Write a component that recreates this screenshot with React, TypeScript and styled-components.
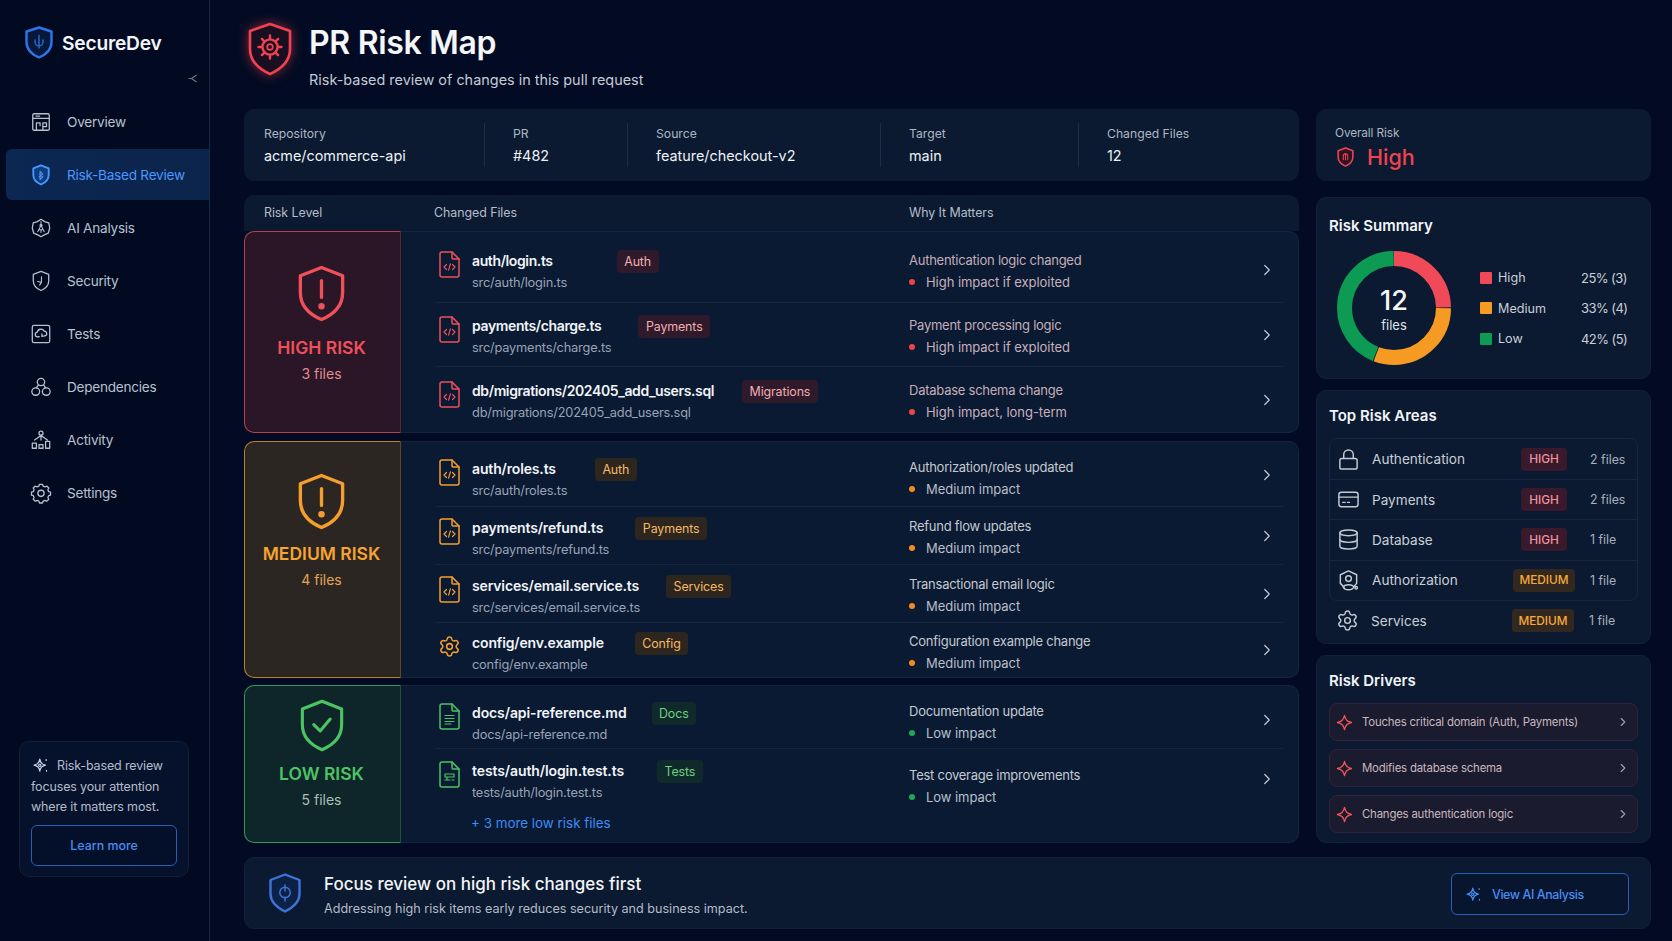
import React from "react";
import styled, { createGlobalStyle } from "styled-components";
import { ChevronRight, Database, Lock, Settings } from "lucide-react";

type Level = "high" | "medium" | "low";

const tone = {
  high: { main: "#f0505a", soft: "#2a1626", edge: "#5c2436", label: "#f0505a", count: "#e08c90", badgeBg: "#2e1a2b", badgeText: "#f3aeb0", first: "#c4aeb6", second: "#c9b1bb", dot: "#f04448", nameSpacing: -0.38 },
  medium: { main: "#f59e2d", soft: "#2c2622", edge: "#5e4526", label: "#f7a431", count: "#e4a455", badgeBg: "#2d261f", badgeText: "#f6b864", first: "#c5c8ce", second: "#b9bec8", dot: "#f28c1c", nameSpacing: -0.15 },
  low: { main: "#4cc464", soft: "#0e2529", edge: "#1d5238", label: "#4cc464", count: "#a9bfb6", badgeBg: "#10292b", badgeText: "#6fd081", first: "#c4cbd2", second: "#b9c0ca", dot: "#1fa85a", nameSpacing: -0.1 },
};

const GlobalStyle = createGlobalStyle`
  html, body {
    margin: 0;
    padding: 0;
    background: #020b22;
  }
  * {
    box-sizing: border-box;
  }
  body {
    font-family: Inter, "Noto Sans", "Liberation Sans", sans-serif;
    color: #e8ecf2;
  }
`;

const Page = styled.div`
  display: flex;
  width: 1672px;
  height: 941px;
  overflow: hidden;
  background: #020b23;
`;

const Sidebar = styled.aside`
  display: flex;
  flex-direction: column;
  flex-shrink: 0;
  width: 210px;
  height: 941px;
  border-right: 1px solid #1a2740;
  background: #010a21;
`;

const LogoRow = styled.div`
  display: flex;
  align-items: center;
  gap: 9px;
  height: 33px;
  margin: 26px 0 0 25px;
`;

const LogoText = styled.span`
  margin-top: 1px;
  font-size: 19.2px;
  font-weight: 600;
  letter-spacing: -0.2px;
  color: #f2f5f9;
`;

const Collapse = styled.svg`
  align-self: flex-end;
  width: 9px;
  height: 9px;
  margin: 15px 12px 0 0;
`;

const Nav = styled.nav`
  display: flex;
  flex-direction: column;
  gap: 2px;
  margin: 13px 0 0 6px;
`;

const NavItem = styled.div<{ $active?: boolean }>`
  display: flex;
  align-items: center;
  gap: 15px;
  height: 51px;
  padding-left: 24px;
  border-radius: 6px 0 0 6px;
  font-size: 13.6px;
  letter-spacing: -0.25px;
  color: ${(p) => (p.$active ? "#4b97ff" : "#b8c1ce")};
  background: ${(p) => (p.$active ? "linear-gradient(90deg, #0b2752, #0b244b)" : "transparent")};
`;

const NavGlyph = styled.svg`
  flex-shrink: 0;
  width: 22px;
  height: 22px;
  fill: none;
  stroke: currentColor;
  stroke-width: 1.4;
  stroke-linecap: round;
  stroke-linejoin: round;
`;

const Tip = styled.div`
  margin: auto 20px 64px 19px;
  padding: 14px 11px 11px 11px;
  height: 136px;
  border: 1px solid #111f38;
  border-radius: 10px;
  background: #06122b;
`;

const TipText = styled.p`
  margin: 0;
  font-size: 12.5px;
  letter-spacing: -0.15px;
  line-height: 20.5px;
  color: #b4bcc9;

  svg {
    width: 17px;
    height: 17px;
    margin: 0 8px -4px 1px;
  }
`;

const LearnMore = styled.div`
  display: flex;
  align-items: center;
  justify-content: center;
  height: 41px;
  margin-top: 7px;
  border: 1px solid #2a5fb8;
  border-radius: 6px;
  background: #04102a;
  font-size: 12.4px;
  font-weight: 500;
  color: #4a8df0;
`;

const Main = styled.main`
  display: flex;
  flex-direction: column;
  flex: 1;
  padding: 0 21px 0 34px;
`;

const Header = styled.header`
  display: flex;
  gap: 17px;
  height: 109px;
  padding: 22px 0 0 4px;
`;

const HeaderMark = styled.svg`
  width: 44px;
  height: 54px;
  filter: drop-shadow(0 0 6px rgba(240, 60, 70, 0.55));
`;

const Title = styled.h1`
  margin: 2px 0 0;
  font-size: 32px;
  line-height: 38px;
  font-weight: 600;
  letter-spacing: -0.3px;
  color: #f4f6fa;
`;

const Subtitle = styled.p`
  margin: 8px 0 0;
  font-size: 14.45px;
  line-height: 20px;
  color: #c3cad5;
`;

const Columns = styled.div`
  display: grid;
  grid-template-columns: 1055px 335px;
  gap: 17px;
`;

const LeftColumn = styled.div`
  display: flex;
  flex-direction: column;
`;

const RightColumn = styled.div`
  display: flex;
  flex-direction: column;
`;

const Panel = styled.section`
  border: 1px solid #122138;
  border-radius: 10px;
  background: #0b1a30;
`;

const InfoBar = styled(Panel)`
  display: grid;
  grid-template-columns: 240px 143px 253px 198px 1fr;
  align-items: center;
  height: 72px;
  border-color: #0b1a30;
`;

const InfoCell = styled.div<{ $pad: number; $last?: boolean }>`
  height: 44px;
  padding-left: ${(p) => p.$pad}px;
  border-right: ${(p) => (p.$last ? "none" : "1px solid #1d2d45")};
`;

const InfoLabel = styled.div`
  padding-top: 1px;
  font-size: 12.2px;
  line-height: 20px;
  color: #aeb6c3;
`;

const InfoValue = styled.div`
  margin-top: 1px;
  font-size: 14.4px;
  line-height: 22px;
  color: #eef1f5;
`;

const TableHead = styled(Panel)`
  display: grid;
  grid-template-columns: 170px 475px 1fr;
  align-items: center;
  height: 36px;
  margin-top: 14px;
  padding: 0 0 2px 19px;
  border-radius: 10px 10px 0 0;
  border-color: #0b1a30;
  font-size: 12.4px;
  letter-spacing: -0.05px;
  color: #b6bdc9;
`;

const Group = styled.div<{ $gap: number }>`
  display: grid;
  grid-template-columns: 157px 1fr;
  margin-top: ${(p) => p.$gap}px;
`;

const LevelCard = styled.div<{ $level: Level; $pad: number }>`
  display: flex;
  flex-direction: column;
  align-items: center;
  padding: ${(p) => p.$pad}px 2px 0 0;
  border: 1px solid ${(p) => tone[p.$level].edge};
  border-left-color: ${(p) => tone[p.$level].main}bb;
  border-top-color: ${(p) => tone[p.$level].main}bb;
  border-bottom-color: ${(p) => tone[p.$level].main}bb;
  border-radius: 10px 0 0 10px;
  background: ${(p) => tone[p.$level].soft};
`;

const LevelName = styled.div<{ $level: Level; $gap: number }>`
  margin-top: ${(p) => p.$gap}px;
  font-size: 17.5px;
  line-height: 24px;
  font-weight: 600;
  color: ${(p) => tone[p.$level].label};
`;

const LevelCount = styled.div<{ $level: Level }>`
  margin-top: 4px;
  font-size: 14px;
  line-height: 20px;
  color: ${(p) => tone[p.$level].count};
`;

const Rows = styled.div`
  padding: 0 15px 0 34px;
  border: 1px solid #14253e;
  border-left: none;
  border-radius: 0 10px 10px 0;
  background: #0a1a33;
`;

const Row = styled.div<{ $h: number; $pad?: number; $plain?: boolean }>`
  display: grid;
  grid-template-columns: 470px 1fr 16px;
  align-items: center;
  height: ${(p) => p.$h}px;
  padding: ${(p) => p.$pad ?? 0}px 8px 0 4px;
  border-bottom: ${(p) => (p.$plain ? "none" : "1px solid #15253d")};
`;

const FileCell = styled.div<{ $shift: number }>`
  display: flex;
  align-items: flex-start;
  gap: 12px;
  margin-top: ${(p) => p.$shift * 2}px;
`;

const FileGlyph = styled.svg<{ $level: Level }>`
  flex-shrink: 0;
  width: 21px;
  height: 27px;
  margin-top: 1px;
  fill: none;
  stroke: ${(p) => tone[p.$level].main};
  stroke-width: 1.5;
  stroke-linecap: round;
  stroke-linejoin: round;
`;

const NameLine = styled.div<{ $gap: number }>`
  display: flex;
  align-items: center;
  gap: ${(p) => p.$gap}px;
  height: 23px;
`;

const FileName = styled.span<{ $level: Level }>`
  padding-bottom: 2px;
  font-size: 14px;
  font-weight: 600;
  letter-spacing: ${(p) => tone[p.$level].nameSpacing}px;
  color: #f1f4f8;
`;

const Badge = styled.span<{ $level: Level }>`
  display: inline-flex;
  align-items: center;
  height: 23px;
  padding: 0 7.5px;
  border-radius: 4px;
  font-size: 12.4px;
  letter-spacing: -0.1px;
  color: ${(p) => tone[p.$level].badgeText};
  background: ${(p) => tone[p.$level].badgeBg};
`;

const FilePath = styled.div`
  font-size: 12.8px;
  letter-spacing: -0.19px;
  line-height: 20px;
  color: #99a3b3;
`;

const WhyCell = styled.div<{ $shift: number }>`
  margin-top: ${(p) => p.$shift * 2}px;
`;

const WhyTitle = styled.div<{ $level: Level }>`
  font-size: 13px;
  letter-spacing: -0.25px;
  line-height: 22px;
  color: ${(p) => tone[p.$level].first};
`;

const WhyImpact = styled.div<{ $level: Level }>`
  display: flex;
  align-items: center;
  gap: 11px;
  font-size: 13px;
  letter-spacing: -0.05px;
  line-height: 22px;
  color: ${(p) => tone[p.$level].second};

  &::before {
    content: "";
    width: 6px;
    height: 6px;
    border-radius: 50%;
    background: ${(p) => tone[p.$level].dot};
  }
`;

const Chevron = styled(ChevronRight)`
  width: 18px;
  height: 18px;
  margin: 0 -1px;
  stroke-width: 1.6;
  color: #c2c9d4;
`;

const MoreLink = styled.div`
  padding: 4px 0 0 36px;
  height: 33px;
  font-size: 13.4px;
  line-height: 20px;
  color: #3f8cf5;
`;

const OverallCard = styled(Panel)`
  height: 72px;
  padding: 12px 0 0 18px;
  border-color: #0b1a30;
`;

const OverallLabel = styled(InfoLabel)`
  font-size: 11.8px;
  letter-spacing: -0.1px;
`;

const OverallValue = styled.div`
  display: flex;
  align-items: center;
  gap: 11px;
  height: 28px;
  font-size: 21.5px;
  font-weight: 500;
  color: #f0434f;
`;

const SideCard = styled(Panel)<{ $h: number; $gap: number; $pad: number }>`
  height: ${(p) => p.$h}px;
  margin-top: ${(p) => p.$gap}px;
  padding: ${(p) => p.$pad}px 12px 0;
`;

const CardTitle = styled.h2`
  margin: 0;
  font-size: 15px;
  line-height: 22px;
  font-weight: 600;
  color: #f1f4f8;
`;

const SummaryBody = styled.div`
  display: flex;
  align-items: center;
  gap: 28px;
  margin: 13px 0 0 7px;
`;

const Donut = styled.div`
  position: relative;
  width: 116px;
  height: 116px;
`;

const DonutRing = styled.svg`
  display: block;
  width: 116px;
  height: 116px;
  transform: rotate(-90deg);
`;

const DonutLabel = styled.div`
  position: absolute;
  inset: 3px 0 0;
  display: flex;
  flex-direction: column;
  align-items: center;
  justify-content: center;
`;

const DonutCount = styled.div`
  font-size: 27px;
  line-height: 30px;
  font-weight: 500;
  color: #f6f7fa;
`;

const DonutUnit = styled.div`
  font-size: 13px;
  line-height: 18px;
  color: #dfe3e9;
`;

const Legend = styled.div`
  display: flex;
  flex-direction: column;
`;

const LegendRow = styled.div`
  display: grid;
  grid-template-columns: 18px 83px auto;
  align-items: center;
  height: 30.5px;
  font-size: 12.6px;
  color: #c9cfd8;
`;

const Swatch = styled.span<{ $color: string }>`
  width: 12px;
  height: 12px;
  border-radius: 1px;
  background: ${(p) => p.$color};
`;

const LegendValue = styled.span`
  font-size: 13px;
  letter-spacing: -0.55px;
`;

const AreaList = styled.div`
  margin-top: 11px;
  border: 1px solid #15263e;
  border-radius: 8px;
`;

const AreaRow = styled.div<{ $line?: boolean }>`
  display: grid;
  grid-template-columns: 34px 137px 70px auto;
  align-items: center;
  height: 40.2px;
  padding-left: 8px;
  border-top: ${(p) => (p.$line ? "1px solid #15263e" : "none")};
  font-size: 13.6px;
  color: #c9cfd8;
`;

const AreaGlyph = styled.span`
  display: flex;
  margin-left: -1px;
  color: #c4cbd5;

  svg {
    width: 23px;
    height: 23px;
    stroke-width: 1.5;
  }
`;

const AreaBadge = styled.span<{ $level: Level }>`
  justify-self: center;
  display: inline-flex;
  align-items: center;
  height: 23px;
  padding: 0 ${(p) => (p.$level === "high" ? 8 : 6.5)}px;
  border-radius: 4px;
  font-size: 11.8px;
  font-weight: 500;
  color: ${(p) => (p.$level === "high" ? "#f0919c" : "#f6a93c")};
  background: ${(p) => (p.$level === "high" ? "#381a2c" : "#33281f")};
`;

const AreaCount = styled.span`
  margin-left: 11px;
  font-size: 12.4px;
  color: #a7afbc;
`;

const DriverList = styled.div`
  display: flex;
  flex-direction: column;
  gap: 8px;
  margin-top: 11px;
`;

const DriverRow = styled.div`
  display: flex;
  align-items: center;
  gap: 9px;
  height: 38px;
  padding: 0 7px 0 6px;
  border: 1px solid #33233a;
  border-radius: 8px;
  background: #1a1b2e;
  font-size: 11.4px;
  letter-spacing: -0.2px;
  color: #c8b8be;

  span {
    flex: 1;
  }
`;

const DriverGlyph = styled.svg`
  flex-shrink: 0;
  width: 17px;
  height: 17px;
  fill: none;
  stroke: #f0565c;
  stroke-width: 1.8;
  stroke-linejoin: round;
`;

const DriverChevron = styled(ChevronRight)`
  width: 14px;
  height: 14px;
  color: #97a0ae;
`;

const Footer = styled(Panel)`
  display: flex;
  align-items: center;
  height: 72px;
  margin-top: 14px;
  padding: 0 21px 0 24px;
`;

const FooterText = styled.div`
  flex: 1;
  margin: 5px 0 0 23px;
`;

const FooterTitle = styled.div`
  font-size: 17px;
  line-height: 24px;
  font-weight: 500;
  color: #f3f5f9;
`;

const FooterSub = styled.div`
  margin-top: 3px;
  font-size: 12.6px;
  line-height: 20px;
  color: #b4bcc9;
`;

const ViewButton = styled.div`
  display: flex;
  align-items: center;
  gap: 10px;
  width: 178px;
  height: 42px;
  margin-top: 2px;
  padding-left: 13px;
  border: 1px solid #2a5fb8;
  border-radius: 6px;
  background: #07152f;
  font-size: 12.4px;
  letter-spacing: -0.4px;
  font-weight: 500;
  color: #4a8df0;
`;

const SHIELD = "M12 1.6 L20.4 4.8 V12 C20.4 17 16.6 20.4 12 22.4 C7.4 20.4 3.6 17 3.6 12 V4.8 Z";

const Sparkle = ({ color, size = 17 }: { color: string; size?: number }) => (
  <svg viewBox="0 0 24 24" width={size} height={size} fill="none" stroke={color} strokeWidth="1.7" strokeLinejoin="round" strokeLinecap="round">
    <path d="M11 3 C11.6 8 14 10.6 19 11.5 C14 12.4 11.6 15 11 20 C10.4 15 8 12.4 3 11.5 C8 10.6 10.4 8 11 3 Z" />
    <circle cx="11" cy="11.5" r="1.6" />
    <path d="M20 3.5v1.4M20.5 19v1" />
  </svg>
);

const LevelShield = ({ level }: { level: Level }) => (
  <svg
    viewBox="0 0 48 58"
    width={level === "low" ? 46 : 49}
    height={level === "low" ? 53 : 57}
    fill="none"
    stroke={tone[level].main}
    strokeWidth="3.4"
    strokeLinejoin="round"
    strokeLinecap="round"
  >
    <path d="M24 2.5 L45.5 11 V28 C45.5 42 36 50.5 24 55.5 C12 50.5 2.5 42 2.5 28 V11 Z" />
    {level === "low" ? (
      <path d="M15 28 L22 35 L33 22" />
    ) : (
      <>
        <path d="M24 16 V33" />
        <circle cx="24" cy="42" r="1.6" fill={tone[level].main} />
      </>
    )}
  </svg>
);

const FileIcon = ({ level, kind }: { level: Level; kind: string }) => {
  if (kind === "gear") {
    return (
      <Settings size={23} color={tone[level].main} strokeWidth={1.6} style={{ flexShrink: 0, marginLeft: -1, marginRight: -1, marginTop: 3 }} />
    );
  }
  return (
    <FileGlyph $level={level} viewBox="0 0 21 27">
      <path d="M3 1 H13 L20 8 V24 A2 2 0 0 1 18 26 H3 A2 2 0 0 1 1 24 V3 A2 2 0 0 1 3 1 Z" />
      <path d="M13 1 V7 A1 1 0 0 0 14 8 H20" />
      {kind === "code" && <path strokeWidth="1.2" d="M7.5 13.5 L5 16 L7.5 18.5 M13.5 13.5 L16 16 L13.5 18.5 M11.4 12.8 L9.6 19.2" />}
      {kind === "doc" && <path strokeWidth="1.2" d="M6 12.5h9M6 15.5h9M6 18.5h9M6 21h6" />}
      {kind === "test" && <path strokeWidth="1.2" d="M6 13h9v3H6zM6 19h5M13 19h2M8 16v3" />}
    </FileGlyph>
  );
};

const navItems = [
  {
    label: "Overview",
    glyph: (
      <>
        <rect x="3" y="3" width="18" height="18" rx="1.5" />
        <path d="M3 8h18M6.5 5.5h4M7 21v-8h4v3M14 21v-4h4v-4h-4v4" />
      </>
    ),
  },
  {
    label: "Risk-Based Review",
    active: true,
    glyph: (
      <>
        <path d={SHIELD} strokeWidth="2" fill="#0f3d7c" />
        <path d="M11 8 L14 11 L10 14 M11 8 V17 L14 14 L10.5 11" strokeWidth="1.2" />
      </>
    ),
  },
  {
    label: "AI Analysis",
    glyph: (
      <>
        <path d="M12 2.5 L16 5 L20.5 6.5 L21.5 12 L20 17.5 L15.5 19.5 L12 21.5 L8.5 19.5 L4 17.5 L2.5 12 L3.5 6.5 L8 5 Z" />
        <path d="M12 5v4M12 9l-3.5 7M12 9l3.5 7M10 14h4M12 14v3" strokeWidth="1.1" />
        <circle cx="12" cy="9" r="1" />
      </>
    ),
  },
  {
    label: "Security",
    glyph: (
      <>
        <path d={SHIELD} />
        <path d="M12.5 7.5 V13.5 L10.5 16.5 M8.5 12.5 L12.5 13.5" strokeWidth="1.2" />
      </>
    ),
  },
  {
    label: "Tests",
    glyph: (
      <>
        <rect x="2.5" y="2.5" width="19" height="19" rx="2" />
        <path d="M10 15 H8.5 A2.5 2.5 0 0 1 8 10 A4 4 0 0 1 15.5 9 A2.5 2.5 0 0 1 16 14 L13 14.5 L13 12" />
      </>
    ),
  },
  {
    label: "Dependencies",
    glyph: (
      <>
        <circle cx="12" cy="6.5" r="4" />
        <rect x="2" y="13" width="8.5" height="8" rx="4" />
        <rect x="13.5" y="13" width="8.5" height="8" rx="4" />
        <path d="M9 10 L7 13M15 10 L17 13" />
      </>
    ),
  },
  {
    label: "Activity",
    glyph: (
      <>
        <circle cx="12" cy="4.5" r="2.2" />
        <path d="M12 7 L5 12M12 7 L19 12M12 7 V12M2.5 21 V15.5 H7 V21 Z M9.8 21 V17 H14.2 V21 Z M17 21 V13.5 H21.5 V21 Z" />
      </>
    ),
  },
  {
    label: "Settings",
    glyph: (
      <>
        <path d="M10.3 2.5h3.4l.6 2 2 .9 1.9-1 2.3 2.2-1 1.9.9 2 2 .6v3.2l-2 .6-.9 2 1 1.9-2.3 2.2-1.9-1-2 .9-.6 2h-3.4l-.6-2-2-.9-1.9 1-2.3-2.2 1-1.9-.9-2-2-.6v-3.2l2-.6.9-2-1-1.9 2.3-2.2 1.9 1 2-.9z" />
        <circle cx="12" cy="12.4" r="3.4" />
      </>
    ),
  },
];

interface FileRow {
  name: string;
  path: string;
  tag: string;
  gap: number;
  why: string;
  impact: string;
  icon: string;
  h: number;
  pad?: number;
  fileShift: number;
  whyShift: number;
}

const groups: {
  level: Level;
  title: string;
  count: string;
  pad: number;
  gap: number;
  labelGap: number;
  rows: FileRow[];
}[] = [
  {
    level: "high",
    title: "HIGH RISK",
    count: "3 files",
    pad: 33,
    gap: 0,
    labelGap: 14,
    rows: [
      { name: "auth/login.ts", path: "src/auth/login.ts", tag: "Auth", gap: 64, why: "Authentication logic changed", impact: "High impact if exploited", icon: "code", h: 71, pad: 6, fileShift: 1, whyShift: 0.5 },
      { name: "payments/charge.ts", path: "src/payments/charge.ts", tag: "Payments", gap: 37, why: "Payment processing logic", impact: "High impact if exploited", icon: "code", h: 64, fileShift: 1.5, whyShift: 1 },
      { name: "db/migrations/202405_add_users.sql", path: "db/migrations/202405_add_users.sql", tag: "Migrations", gap: 28, why: "Database schema change", impact: "High impact, long-term", icon: "code", h: 65, fileShift: 2, whyShift: 1.5 },
    ],
  },
  {
    level: "medium",
    title: "MEDIUM RISK",
    count: "4 files",
    pad: 31,
    gap: 8,
    labelGap: 12,
    rows: [
      { name: "auth/roles.ts", path: "src/auth/roles.ts", tag: "Auth", gap: 39, why: "Authorization/roles updated", impact: "Medium impact", icon: "code", h: 65, pad: 2, fileShift: 4, whyShift: 2.5 },
      { name: "payments/refund.ts", path: "src/payments/refund.ts", tag: "Payments", gap: 32, why: "Refund flow updates", impact: "Medium impact", icon: "code", h: 58, fileShift: 3, whyShift: 1 },
      { name: "services/email.service.ts", path: "src/services/email.service.ts", tag: "Services", gap: 27, why: "Transactional email logic", impact: "Medium impact", icon: "code", h: 58, fileShift: 3, whyShift: 1 },
      { name: "config/env.example", path: "config/env.example", tag: "Config", gap: 31, why: "Configuration example change", impact: "Medium impact", icon: "gear", h: 54, fileShift: 3, whyShift: 2 },
    ],
  },
  {
    level: "low",
    title: "LOW RISK",
    count: "5 files",
    pad: 13,
    gap: 7,
    labelGap: 10,
    rows: [
      { name: "docs/api-reference.md", path: "docs/api-reference.md", tag: "Docs", gap: 25, why: "Documentation update", impact: "Low impact", icon: "doc", h: 63, pad: 6, fileShift: 3, whyShift: 1.5 },
      { name: "tests/auth/login.test.ts", path: "tests/auth/login.test.ts", tag: "Tests", gap: 33, why: "Test coverage improvements", impact: "Low impact", icon: "test", h: 60, fileShift: 2.5, whyShift: 6.5 },
    ],
  },
];

const donutParts = [
  { color: "#f04a58", from: 0, to: 25 },
  { color: "#f59a22", from: 25, to: 56 },
  { color: "#0d9a52", from: 56, to: 100 },
];

const legend = [
  { name: "High", color: "#f04a58", value: "25% (3)" },
  { name: "Medium", color: "#f59a22", value: "33% (4)" },
  { name: "Low", color: "#0d9a52", value: "42% (5)" },
];

const areas: { name: string; level: Level; count: string; icon: React.ReactNode }[] = [
  { name: "Authentication", level: "high", count: "2 files", icon: <Lock /> },
  {
    name: "Payments",
    level: "high",
    count: "2 files",
    icon: (
      <svg viewBox="0 0 24 24" fill="none" stroke="currentColor" strokeLinecap="round">
        <rect x="2" y="4.5" width="20" height="15" rx="2.5" />
        <path d="M2 9.5h20M6 15h2.5M11 15h2" />
      </svg>
    ),
  },
  { name: "Database", level: "high", count: "1 file", icon: <Database /> },
  {
    name: "Authorization",
    level: "medium",
    count: "1 file",
    icon: (
      <svg viewBox="0 0 24 24" fill="none" stroke="currentColor" strokeLinecap="round" strokeLinejoin="round">
        <path d="M7.5 19 L3.5 15 V6 L12 2 L20.5 6 V15 L18 18" />
        <circle cx="12" cy="10" r="3" />
        <path d="M6.5 19 C7.5 15.5 16.5 15.5 17.5 19 C16 22.5 8 22.5 6.5 19 Z" />
        <circle cx="20" cy="19.5" r="1.3" />
      </svg>
    ),
  },
  { name: "Services", level: "medium", count: "1 file", icon: <Settings /> },
];

const drivers = [
  "Touches critical domain (Auth, Payments)",
  "Modifies database schema",
  "Changes authentication logic",
];

const RING = 2 * Math.PI * 49.5;

const App: React.FC = () => {
  return (
    <Page>
      <GlobalStyle />
      <Sidebar>
        <LogoRow>
          <svg viewBox="0 0 28 33" width="28" height="33" fill="none" stroke="#2f74e8" strokeLinejoin="round" strokeLinecap="round">
            <path d="M14 1.5 L26.5 5.5 V16 C26.5 23.5 21 28.5 14 31.5 C7 28.5 1.5 23.5 1.5 16 V5.5 Z" strokeWidth="2.4" fill="#06193c" />
            <path d="M14 9.5 V22 M10 14 V16 A4 4 0 0 0 18 16 V14" strokeWidth="1.5" stroke="#2a66cc" />
          </svg>
          <LogoText>SecureDev</LogoText>
        </LogoRow>
        <Collapse viewBox="0 0 9 9" fill="none" stroke="#6d7889" strokeWidth="1.1">
          <path d="M8.5 1 L3.5 4.5 L8.5 8 M0.5 4.5 H4" />
        </Collapse>
        <Nav>
          {navItems.map((item) => (
            <NavItem key={item.label} $active={item.active}>
              <NavGlyph viewBox="0 0 24 24">{item.glyph}</NavGlyph>
              {item.label}
            </NavItem>
          ))}
        </Nav>
        <Tip>
          <TipText>
            <Sparkle color="#c9d4e8" />
            Risk-based review focuses your attention where it matters most.
          </TipText>
          <LearnMore>Learn more</LearnMore>
        </Tip>
      </Sidebar>

      <Main>
        <Header>
          <HeaderMark viewBox="0 0 44 54" fill="none" stroke="#f0434f" strokeLinejoin="round" strokeLinecap="round">
            <path d="M22 2 L42 9 V27 C42 39 33 47 22 52 C11 47 2 39 2 27 V9 Z" strokeWidth="2.6" fill="#1a0f22" />
            <circle cx="22" cy="25" r="7.6" strokeWidth="2.4" />
            <circle cx="22" cy="25" r="2.8" strokeWidth="1.8" />
            <path d="M22 13.5 V17M22 33 V36.5M10.5 25 H14M30 25 H33.5M13.9 16.9 L16.4 19.4M27.6 30.6 L30.1 33.1M30.1 16.9 L27.6 19.4M16.4 30.6 L13.9 33.1" strokeWidth="2.4" />
          </HeaderMark>
          <div>
            <Title>PR Risk Map</Title>
            <Subtitle>Risk-based review of changes in this pull request</Subtitle>
          </div>
        </Header>

        <Columns>
          <LeftColumn>
            <InfoBar>
              <InfoCell $pad={19}>
                <InfoLabel>Repository</InfoLabel>
                <InfoValue>acme/commerce-api</InfoValue>
              </InfoCell>
              <InfoCell $pad={28}>
                <InfoLabel>PR</InfoLabel>
                <InfoValue>#482</InfoValue>
              </InfoCell>
              <InfoCell $pad={28}>
                <InfoLabel>Source</InfoLabel>
                <InfoValue>feature/checkout-v2</InfoValue>
              </InfoCell>
              <InfoCell $pad={28}>
                <InfoLabel>Target</InfoLabel>
                <InfoValue>main</InfoValue>
              </InfoCell>
              <InfoCell $pad={28} $last>
                <InfoLabel>Changed Files</InfoLabel>
                <InfoValue>12</InfoValue>
              </InfoCell>
            </InfoBar>

            <TableHead>
              <span>Risk Level</span>
              <span>Changed Files</span>
              <span>Why It Matters</span>
            </TableHead>

            {groups.map((group) => (
              <Group key={group.level} $gap={group.gap}>
                <LevelCard $level={group.level} $pad={group.pad}>
                  <LevelShield level={group.level} />
                  <LevelName $level={group.level} $gap={group.labelGap}>{group.title}</LevelName>
                  <LevelCount $level={group.level}>{group.count}</LevelCount>
                </LevelCard>
                <Rows>
                  {group.rows.map((row, i) => (
                    <Row
                      key={row.name}
                      $h={row.h}
                      $pad={row.pad}
                      $plain={i === group.rows.length - 1}
                    >
                      <FileCell $shift={row.fileShift}>
                        <FileIcon level={group.level} kind={row.icon} />
                        <div>
                          <NameLine $gap={row.gap}>
                            <FileName $level={group.level}>{row.name}</FileName>
                            <Badge $level={group.level}>{row.tag}</Badge>
                          </NameLine>
                          <FilePath>{row.path}</FilePath>
                        </div>
                      </FileCell>
                      <WhyCell $shift={row.whyShift}>
                        <WhyTitle $level={group.level}>{row.why}</WhyTitle>
                        <WhyImpact $level={group.level}>{row.impact}</WhyImpact>
                      </WhyCell>
                      <Chevron />
                    </Row>
                  ))}
                  {group.level === "low" && <MoreLink>+ 3 more low risk files</MoreLink>}
                </Rows>
              </Group>
            ))}
          </LeftColumn>

          <RightColumn>
            <OverallCard>
              <OverallLabel>Overall Risk</OverallLabel>
              <OverallValue>
                <svg viewBox="0 0 24 24" width="21" height="24" fill="none" stroke="#f0434f" strokeWidth="1.8" strokeLinejoin="round" strokeLinecap="round">
                  <path d={SHIELD} fill="#2a1426" />
                  <path d="M9.5 15 V9.5 L12 8 L14.5 9.5 V15 M12 8 V15" strokeWidth="1.2" />
                </svg>
                High
              </OverallValue>
            </OverallCard>

            <SideCard $h={182} $gap={16} $pad={17}>
              <CardTitle>Risk Summary</CardTitle>
              <SummaryBody>
                <Donut>
                  <DonutRing viewBox="0 0 116 116">
                    {donutParts.map((part) => (
                      <circle
                        key={part.color}
                        cx="58"
                        cy="58"
                        r="49.5"
                        fill="none"
                        stroke={part.color}
                        strokeWidth="15"
                        strokeDasharray={`${((part.to - part.from) / 100) * RING - 0.8} ${RING}`}
                        strokeDashoffset={`${(-part.from / 100) * RING}`}
                      />
                    ))}
                  </DonutRing>
                  <DonutLabel>
                    <DonutCount>12</DonutCount>
                    <DonutUnit>files</DonutUnit>
                  </DonutLabel>
                </Donut>
                <Legend>
                  {legend.map((item) => (
                    <LegendRow key={item.name}>
                      <Swatch $color={item.color} />
                      <span>{item.name}</span>
                      <LegendValue>{item.value}</LegendValue>
                    </LegendRow>
                  ))}
                </Legend>
              </SummaryBody>
            </SideCard>

            <SideCard $h={254} $gap={11} $pad={14}>
              <CardTitle>Top Risk Areas</CardTitle>
              <AreaList>
                {areas.slice(0, 4).map((area, i) => (
                  <AreaRow key={area.name} $line={i > 0}>
                    <AreaGlyph>{area.icon}</AreaGlyph>
                    <span>{area.name}</span>
                    <AreaBadge $level={area.level}>{area.level.toUpperCase()}</AreaBadge>
                    <AreaCount>{area.count}</AreaCount>
                  </AreaRow>
                ))}
              </AreaList>
              {areas.slice(4).map((area) => (
                <AreaRow key={area.name}>
                  <AreaGlyph>{area.icon}</AreaGlyph>
                  <span>{area.name}</span>
                  <AreaBadge $level={area.level}>{area.level.toUpperCase()}</AreaBadge>
                  <AreaCount>{area.count}</AreaCount>
                </AreaRow>
              ))}
            </SideCard>

            <SideCard $h={188} $gap={11} $pad={14}>
              <CardTitle>Risk Drivers</CardTitle>
              <DriverList>
                {drivers.map((driver) => (
                  <DriverRow key={driver}>
                    <DriverGlyph viewBox="0 0 24 24">
                      <path d="M12 2 C13 8 16 11 22 12 C16 13 13 16 12 22 C11 16 8 13 2 12 C8 11 11 8 12 2 Z" />
                    </DriverGlyph>
                    <span>{driver}</span>
                    <DriverChevron />
                  </DriverRow>
                ))}
              </DriverList>
            </SideCard>
          </RightColumn>
        </Columns>

        <Footer>
          <svg viewBox="0 0 32 40" width="32" height="40" fill="none" stroke="#3c74d8" strokeLinejoin="round" strokeLinecap="round">
            <path d="M16 1.5 L30.5 7 V21 C30.5 29 24 34.5 16 38.5 C8 34.5 1.5 29 1.5 21 V7 Z" strokeWidth="2.4" fill="#0d2146" />
            <circle cx="16" cy="19.5" r="5.2" strokeWidth="1.5" />
            <path d="M16 12 V18M16 24 V28" strokeWidth="1.5" />
          </svg>
          <FooterText>
            <FooterTitle>Focus review on high risk changes first</FooterTitle>
            <FooterSub>Addressing high risk items early reduces security and business impact.</FooterSub>
          </FooterText>
          <ViewButton>
            <Sparkle color="#4a8df0" size={17} />
            View AI Analysis
          </ViewButton>
        </Footer>
      </Main>
    </Page>
  );
};

export default App;
